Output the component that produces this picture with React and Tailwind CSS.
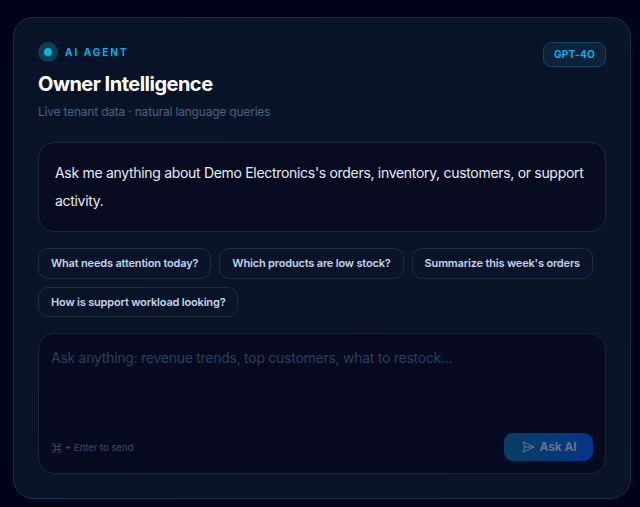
import React from 'react';

const suggestions = [
  'What needs attention today?',
  'Which products are low stock?',
  "Summarize this week's orders",
  'How is support workload looking?',
];

function SendIcon() {
  return (
    <svg className="w-3.5 h-3.5" fill="none" stroke="currentColor" viewBox="0 0 24 24" strokeWidth="1.8" strokeLinecap="round" strokeLinejoin="round">
      <path d="M3.7 3.2 22 12 3.7 20.8 6.5 12Z" />
      <path d="M6.5 12H22" />
    </svg>
  );
}

function CommandIcon() {
  return (
    <svg className="w-3 h-3" fill="none" stroke="currentColor" viewBox="0 0 24 24" strokeWidth="1.6" strokeLinecap="round" strokeLinejoin="round">
      <path d="M15 6v12a3 3 0 1 0 3-3H6a3 3 0 1 0 3 3V6a3 3 0 1 0-3 3h12a3 3 0 1 0-3-3" />
    </svg>
  );
}

export default function App() {
  return (
    <div className="h-[507px] overflow-hidden bg-[#01031a] px-[13px] pt-[17px] font-['Inter',sans-serif]">
      <div className="h-[482px] w-[618px] rounded-[20px] border border-[#123246] bg-gradient-to-br from-[#081328] to-[#0b1426] p-6">
        <div className="flex items-start justify-between">
          <div>
            <div className="flex items-center gap-[7px]">
              <div className="flex h-5 w-5 items-center justify-center rounded-full bg-[#0c3f55]">
                <div className="h-2 w-2 rounded-full bg-[#06b6e0]" />
              </div>
              <span className="text-[10px] font-bold leading-none tracking-[0.2em] text-[#06aee6]">AI AGENT</span>
            </div>
            <h1 className="mt-[9px] text-[20px] font-bold leading-[26px] tracking-[-0.0255em] text-white">Owner Intelligence</h1>
            <p className="mt-[6px] text-xs leading-[18px] tracking-[-0.017em] text-[#4f6080]">Live tenant data · natural language queries</p>
          </div>
          <div className="rounded-[8px] border border-[#0e4463] bg-[#0c2238] px-[10px] py-[5px] text-[10px] font-bold leading-[13px] tracking-[0.03em] text-[#06b0e6]">
            GPT-4O
          </div>
        </div>

        <div className="mt-[21px] rounded-2xl border border-[#1a2a3d] bg-[#060b20] px-4 py-4">
          <p className="text-sm leading-7 tracking-[-0.022em] text-[#e8edf5]">
            Ask me anything about Demo Electronics's orders, inventory, customers, or support activity.
          </p>
        </div>

        <div className="mt-4 flex flex-wrap gap-2">
          {suggestions.map((s) => (
            <button key={s} className="h-[30.5px] rounded-[10px] border border-[#1e2c40] bg-[#0a1428] px-3 text-[11px] font-semibold tracking-[-0.016em] text-[#c5d5ee]">
              {s}
            </button>
          ))}
        </div>

        <div className="mt-4 flex h-[140.5px] flex-col justify-between rounded-2xl border border-[#16243a] bg-[#050a20] px-3 pb-3 pt-[14px]">
          <p className="text-sm leading-5 tracking-[-0.019em] text-[#2c3f5c]">Ask anything: revenue trends, top customers, what to restock...</p>
          <div className="flex items-center justify-between">
            <div className="flex items-center gap-[2px] pt-[3px] text-[9.5px] text-[#3c4a66]">
              <CommandIcon />
              <span>+ Enter to send</span>
            </div>
            <button className="flex h-7 w-[89px] items-center justify-center gap-[5px] rounded-[9px] bg-gradient-to-r from-[#083d62] to-[#08338a] text-xs font-bold tracking-[-0.01em] text-[#66748a]">
              <SendIcon />
              Ask AI
            </button>
          </div>
        </div>
      </div>
    </div>
  );
}
